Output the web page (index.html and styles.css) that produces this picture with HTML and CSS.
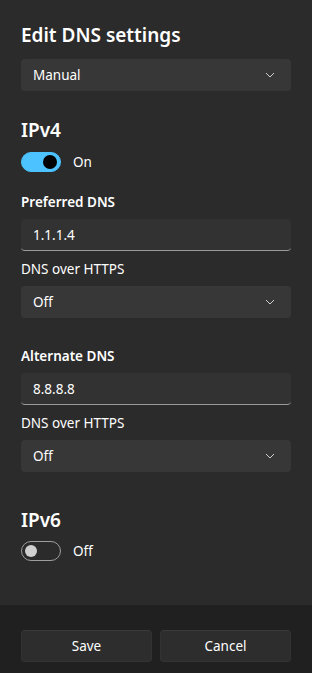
FILE: index.html
```html
<!DOCTYPE html>
<html>
<head>
  <meta charset="UTF-8">
  <link rel="stylesheet" href="styles.css">
</head>
<body>
  <div class="dialog">
    <div class="content">
      <h1 class="title">Edit DNS settings</h1>
      <div class="select">
        <span>Manual</span>
        <svg class="chevron" width="10" height="6" viewBox="0 0 10 6"><polyline points="1,1 5,5 9,1" fill="none" stroke="#cfcfcf" stroke-width="1"/></svg>
      </div>

      <h2 class="section">IPv4</h2>
      <div class="toggle-row">
        <span class="toggle on"><span class="knob"></span></span>
        <span class="toggle-label">On</span>
      </div>

      <div class="field-label first">Preferred DNS</div>
      <div class="input">1.1.1.4</div>
      <div class="sub-label">DNS over HTTPS</div>
      <div class="select">
        <span>Off</span>
        <svg class="chevron" width="10" height="6" viewBox="0 0 10 6"><polyline points="1,1 5,5 9,1" fill="none" stroke="#cfcfcf" stroke-width="1"/></svg>
      </div>

      <div class="field-label">Alternate DNS</div>
      <div class="input">8.8.8.8</div>
      <div class="sub-label">DNS over HTTPS</div>
      <div class="select">
        <span>Off</span>
        <svg class="chevron" width="10" height="6" viewBox="0 0 10 6"><polyline points="1,1 5,5 9,1" fill="none" stroke="#cfcfcf" stroke-width="1"/></svg>
      </div>

      <h2 class="section v6">IPv6</h2>
      <div class="toggle-row">
        <span class="toggle"><span class="knob"></span></span>
        <span class="toggle-label">Off</span>
      </div>
    </div>

    <div class="footer">
      <button class="btn">Save</button>
      <button class="btn">Cancel</button>
    </div>
  </div>
</body>
</html>
```

FILE: styles.css
```css
body {
  margin: 0;
  background: #2b2b2b;
  font-family: "Noto Sans", "Open Sans", sans-serif;
  color: #ffffff;
}

.dialog {
  display: flex;
  flex-direction: column;
  height: 673px;
}

.content {
  flex: 1;
  padding: 21px 21px 0;
}

.title {
  margin: 0;
  font-size: 19px;
  font-weight: 600;
  line-height: 28px;
}

.select {
  margin-top: 10px;
  height: 32px;
  background: #373737;
  border-radius: 4px;
  display: flex;
  align-items: center;
  justify-content: space-between;
  padding: 0 16px 0 12px;
  font-size: 13.5px;
}

.chevron {
  display: block;
}

.section {
  margin: 25px 0 0;
  font-size: 19px;
  font-weight: 600;
  line-height: 28px;
}

.section.v6 {
  margin-top: 34px;
}

.toggle-row {
  margin-top: 8px;
  display: flex;
  align-items: center;
  gap: 12px;
  height: 20px;
}

.section.v6 + .toggle-row {
  margin-top: 7px;
}

.toggle {
  position: relative;
  width: 40px;
  height: 20px;
  box-sizing: border-box;
  border-radius: 10px;
  border: 1px solid #9e9e9e;
}

.toggle .knob {
  position: absolute;
  top: 3px;
  left: 3px;
  width: 12px;
  height: 12px;
  border-radius: 50%;
  background: #d0d0d0;
}

.toggle.on {
  background: #4cc2ff;
  border-color: #4cc2ff;
}

.toggle.on .knob {
  left: auto;
  right: 3px;
  top: 2px;
  width: 14px;
  height: 14px;
  background: #000000;
}

.toggle-label {
  font-size: 13.5px;
}

.field-label {
  margin-top: 28px;
  font-size: 13.5px;
  font-weight: 600;
  line-height: 20px;
}

.field-label.first {
  margin-top: 20px;
}

.input {
  margin-top: 7px;
  height: 32px;
  box-sizing: border-box;
  background: #323232;
  border-radius: 4px;
  border-bottom: 1px solid #9a9a9a;
  padding: 0 12px;
  display: flex;
  align-items: center;
  font-size: 13.5px;
}

.sub-label {
  margin-top: 8px;
  font-size: 13.5px;
  line-height: 20px;
}

.sub-label + .select {
  margin-top: 7px;
}

.footer {
  height: 68px;
  box-sizing: border-box;
  background: #202020;
  padding: 25px 21px 0;
  display: flex;
  gap: 8px;
}

.btn {
  flex: 1;
  height: 32px;
  background: #2d2d2d;
  border: 1px solid #333333;
  border-top-color: #393939;
  border-radius: 4px;
  color: #ffffff;
  font-family: "Noto Sans", "Open Sans", sans-serif;
  font-size: 13.5px;
}
```
